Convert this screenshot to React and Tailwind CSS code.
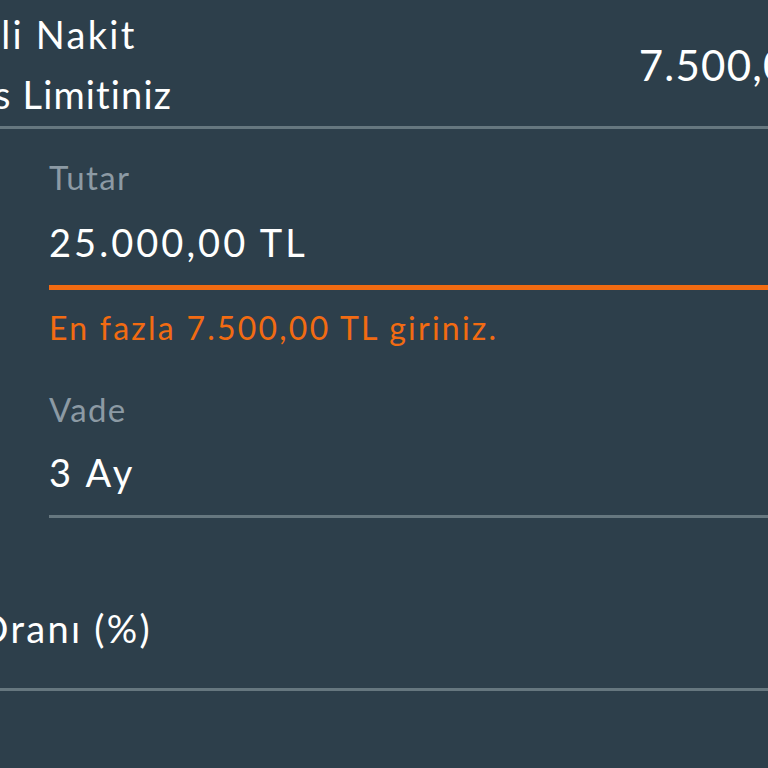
import React from "react";

const font = { fontFamily: "Lato, 'Noto Sans', sans-serif" };

export default function App() {
  return (
    <div
      className="w-[768px] h-[768px] overflow-hidden bg-[#2d3f4b] text-white"
      style={font}
    >
      <div className="ml-[-108px] w-[982px]">
        {/* Top row */}
        <div className="flex h-[129px] items-center justify-between border-b-[3px] border-[#66777f]">
          <div className="flex flex-col text-[38px] leading-[60px] pt-[2px]">
            <span className="tracking-[0.06em]">Taksitli Nakit</span>
            <span className="ml-[14px] tracking-[0.03em]">Avans Limitiniz</span>
          </div>
          <div className="text-[42px] tracking-[0.03em] pt-[4px]">7.500,00 TL</div>
        </div>

        {/* Form */}
        <div className="pl-[157px]">
          <div className="pt-[28px] text-[33px] leading-[40px] tracking-[0.04em] text-[#8c9aa4]">Tutar</div>
          <div className="pt-[23px] text-[38px] leading-[44px] tracking-[0.08em]">25.000,00 TL</div>
          <div className="mt-[21px] h-[5px] bg-[#f26b12]"></div>
          <div className="pt-[18px] text-[32px] leading-[40px] tracking-[0.07em] text-[#f26b12]">
            En fazla 7.500,00 TL giriniz.
          </div>
          <div className="pt-[41px] text-[33px] leading-[40px] tracking-[0.04em] text-[#8c9aa4]">Vade</div>
          <div className="pt-[21px] text-[38px] leading-[44px] tracking-[0.08em]">3 Ay</div>
          <div className="mt-[21px] h-[3px] bg-[#66777f]"></div>
        </div>

        {/* Faiz Oranı row */}
        <div className="h-[173px] border-b-[3px] border-[#66777f] pt-[88px]">
          <div className="ml-[1px] text-[38px] leading-[44px] tracking-[0.06em]">Faiz Oranı (%)</div>
        </div>
      </div>
    </div>
  );
}
